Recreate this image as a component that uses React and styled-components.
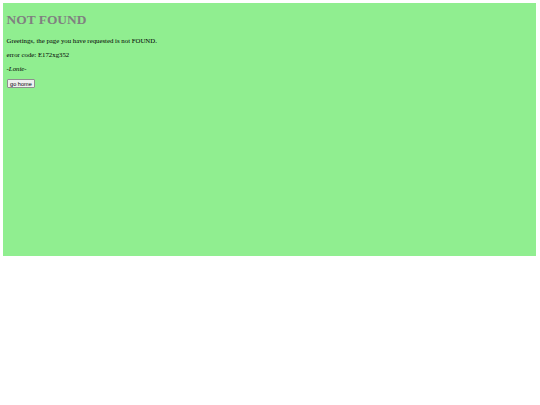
import React from "react";
import styled, { createGlobalStyle } from "styled-components";

const GlobalStyle = createGlobalStyle`
  body {
    margin: 3px;
    background: #fff;
    font-family: "Liberation Serif", "Times New Roman", serif;
  }
`;

const Page = styled.div`
  background: #90ee90;
  height: 253px;
  width: 533px;
  padding: 0.4px 3.6px 0;
  box-sizing: border-box;
  font-size: 6.7px;
`;

const Title = styled.h1`
  color: #808080;
  font-size: 13.4px;
  font-weight: bold;
  margin: 9px 0;
`;

const Text = styled.p`
  color: #000;
  font-size: 6.8px;
  margin: 7px 0;
  font-style: ${(p) => (p.$italic ? "italic" : "normal")};
`;

const HomeButton = styled.button`
  font-family: "Liberation Sans", Arial, sans-serif;
  font-size: 5.6px;
  padding: 0.5px 2.5px;
  margin: 0;
  background: #efefef;
  border: 1px solid #8f8f8f;
  border-radius: 1px;
  color: #000;
  cursor: pointer;
`;

const App = () => {
  return (
    <>
      <GlobalStyle />
      <Page>
        <Title>NOT FOUND</Title>
        <Text>Greetings, the page you have requested is not FOUND.</Text>
        <Text>error code: E172xg352</Text>
        <Text $italic>-Lonie-</Text>
        <HomeButton>go home</HomeButton>
      </Page>
    </>
  );
};

export default App;
